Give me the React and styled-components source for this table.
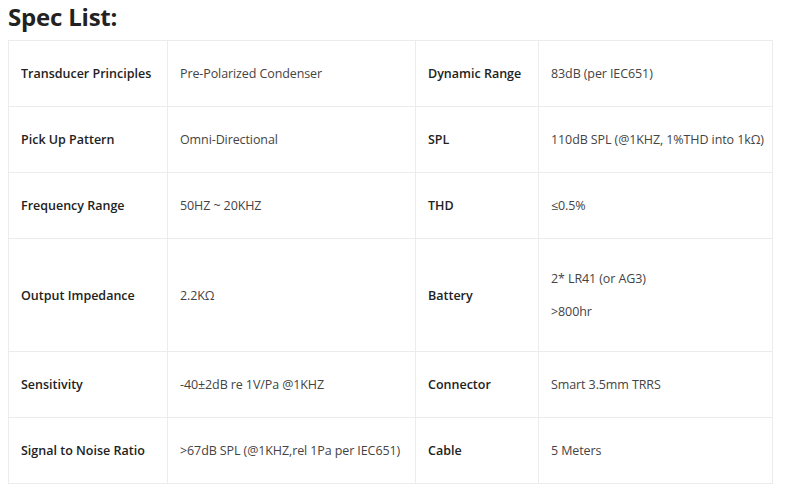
import React from 'react';
import styled, { createGlobalStyle } from 'styled-components';

const GlobalStyle = createGlobalStyle`
  body {
    margin: 0;
    background: #fff;
    font-family: 'Open Sans', 'Liberation Sans', sans-serif;
  }
`;

const Page = styled.div`
  width: 764px;
  padding: 0 8px;
`;

const Title = styled.h2`
  margin: 0 0 4px;
  height: 36px;
  line-height: 34px;
  font-size: 24px;
  font-weight: 700;
  color: #222;
  letter-spacing: -0.2px;
`;

const SpecTable = styled.table`
  width: 764px;
  border-collapse: collapse;
  table-layout: fixed;
  border: 1px solid #ececec;
`;

const Col = styled.col`
  width: ${(p) => p.$w}px;
`;

const Cell = styled.td`
  border: 1px solid #ececec;
  padding: ${(p) => (p.$tall ? '30px 12px' : '23px 12px')};
  line-height: 19px;
  font-size: 12.5px;
  white-space: nowrap;
  vertical-align: middle;
  color: ${(p) => (p.$label ? '#222' : '#444')};
  font-weight: ${(p) => (p.$label ? 600 : 400)};
  letter-spacing: ${(p) => (p.$label ? 0 : '-0.1px')};

  p {
    margin: 0;
  }
  p + p {
    margin-top: 14px;
  }
`;

const rows = [
  ['Transducer Principles', ['Pre-Polarized Condenser'], 'Dynamic Range', ['83dB (per IEC651)']],
  ['Pick Up Pattern', ['Omni-Directional'], 'SPL', ['110dB SPL (@1KHZ, 1%THD into 1kΩ)']],
  ['Frequency Range', ['50HZ ~ 20KHZ'], 'THD', ['≤0.5%']],
  ['Output Impedance', ['2.2KΩ'], 'Battery', ['2* LR41 (or AG3)', '>800hr']],
  ['Sensitivity', ['-40±2dB re 1V/Pa @1KHZ'], 'Connector', ['Smart 3.5mm TRRS']],
  ['Signal to Noise Ratio', ['>67dB SPL (@1KHZ,rel 1Pa per IEC651)'], 'Cable', ['5 Meters']],
];

const Value = ({ lines, tall }) => (
  <Cell $tall={tall}>
    {lines.length > 1 ? lines.map((l) => <p key={l}>{l}</p>) : lines[0]}
  </Cell>
);

const App = () => (
  <Page>
    <GlobalStyle />
    <Title>Spec List:</Title>
    <SpecTable>
      <colgroup>
        <Col $w={159} />
        <Col $w={248} />
        <Col $w={123} />
        <Col $w={234} />
      </colgroup>
      <tbody>
        {rows.map(([l1, v1, l2, v2]) => {
          const tall = v1.length > 1 || v2.length > 1;
          return (
            <tr key={l1}>
              <Cell $label>{l1}</Cell>
              <Value lines={v1} tall={tall} />
              <Cell $label>{l2}</Cell>
              <Value lines={v2} tall={tall} />
            </tr>
          );
        })}
      </tbody>
    </SpecTable>
  </Page>
);

export default App;
